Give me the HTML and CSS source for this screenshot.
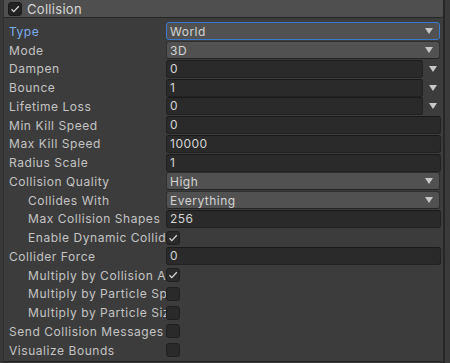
FILE: index.html
```html
<!DOCTYPE html>
<html lang="en">
<head>
    <meta charset="UTF-8">
    <title>Collision Module</title>
    <link rel="stylesheet" href="styles.css">
</head>
<body>
    <div class="inspector">
        <div class="panel">
            <!-- Module header -->
            <div class="module-header">
                <span class="check check-header">
                    <svg viewBox="0 0 14 14" width="14" height="14"><path d="M3.5 7.2 L5.8 9.6 L10.8 4.2" fill="none" stroke="#d8d8d8" stroke-width="1.3"/></svg>
                </span>
                <span class="module-title">Collision</span>
            </div>

            <div class="rows">
                <div class="row">
                    <span class="label focused">Type</span>
                    <div class="popup focus"><span>World</span><i class="arrow"></i></div>
                </div>
                <div class="row">
                    <span class="label">Mode</span>
                    <div class="popup"><span>3D</span><i class="arrow"></i></div>
                </div>
                <div class="row">
                    <span class="label">Dampen</span>
                    <div class="curve-field"><div class="number">0</div><i class="arrow"></i></div>
                </div>
                <div class="row">
                    <span class="label">Bounce</span>
                    <div class="curve-field"><div class="number">1</div><i class="arrow"></i></div>
                </div>
                <div class="row">
                    <span class="label">Lifetime Loss</span>
                    <div class="curve-field"><div class="number">0</div><i class="arrow"></i></div>
                </div>
                <div class="row">
                    <span class="label">Min Kill Speed</span>
                    <div class="number">0</div>
                </div>
                <div class="row">
                    <span class="label">Max Kill Speed</span>
                    <div class="number">10000</div>
                </div>
                <div class="row">
                    <span class="label">Radius Scale</span>
                    <div class="number">1</div>
                </div>
                <div class="row">
                    <span class="label">Collision Quality</span>
                    <div class="popup"><span>High</span><i class="arrow"></i></div>
                </div>
                <div class="row sub">
                    <span class="label">Collides With</span>
                    <div class="popup"><span>Everything</span><i class="arrow"></i></div>
                </div>
                <div class="row sub">
                    <span class="label">Max Collision Shapes</span>
                    <div class="number">256</div>
                </div>
                <div class="row sub">
                    <span class="label">Enable Dynamic Colliders</span>
                    <span class="check on"><svg viewBox="0 0 14 14" width="14" height="14"><path d="M3.5 7.2 L5.8 9.6 L10.8 4.2" fill="none" stroke="#d8d8d8" stroke-width="1.3"/></svg></span>
                </div>
                <div class="row">
                    <span class="label">Collider Force</span>
                    <div class="number">0</div>
                </div>
                <div class="row sub">
                    <span class="label">Multiply by Collision Angle</span>
                    <span class="check on"><svg viewBox="0 0 14 14" width="14" height="14"><path d="M3.5 7.2 L5.8 9.6 L10.8 4.2" fill="none" stroke="#d8d8d8" stroke-width="1.3"/></svg></span>
                </div>
                <div class="row sub">
                    <span class="label">Multiply by Particle Speed</span>
                    <span class="check"></span>
                </div>
                <div class="row sub">
                    <span class="label">Multiply by Particle Size</span>
                    <span class="check"></span>
                </div>
                <div class="row">
                    <span class="label">Send Collision Messages</span>
                    <span class="check"></span>
                </div>
                <div class="row">
                    <span class="label">Visualize Bounds</span>
                    <span class="check"></span>
                </div>
            </div>
        </div>
        <div class="scroll-strip"></div>
    </div>
</body>
</html>
```

FILE: styles.css
```css
/* Base */
body {
    margin: 0;
    background: #383838;
    font-family: 'Inter', 'Noto Sans', sans-serif;
    font-size: 12px;
    color: #c4c4c4;
    overflow: hidden;
}

.inspector {
    display: flex;
    height: 363px;
}

.panel {
    width: 439px;
    height: 361px;
    border-left: 1px solid #303030;
    margin-left: 3px;
    border-bottom: 1px solid #242424;
    background: #3c3c3c;
}

.scroll-strip {
    width: 5px;
    height: 363px;
    border-left: 2px solid #262626;
    background: #3a3a3a;
}

/* Header */
.module-header {
    display: flex;
    align-items: center;
    height: 17px;
    background: #4f4f4f;
    border-bottom: 1px solid #262626;
    border-bottom-right-radius: 3px;
    padding-left: 4px;
}

.module-title {
    margin-left: 5px;
    font-size: 13px;
    color: #d6d6d6;
    letter-spacing: 0.3px;
}

/* Rows */
.rows {
    padding-top: 4px;
}

.row {
    display: flex;
    align-items: center;
    height: 18.75px;
    padding-right: 2px;
}

.label {
    flex: none;
    width: 157px;
    padding-left: 5px;
    white-space: nowrap;
    overflow: hidden;
    letter-spacing: 0.55px;
}

.row.sub .label {
    width: 138px;
    padding-left: 24px;
}

.label.focused {
    color: #7baef0;
}

/* Fields */
.popup {
    flex: 1;
    display: flex;
    align-items: center;
    justify-content: space-between;
    height: 16px;
    padding: 0 6px 0 3px;
    background: #515151;
    border: 1px solid #303030;
    border-bottom-color: #242424;
    border-radius: 3px;
    color: #d4d4d4;
    letter-spacing: 0.5px;
    margin-right: 1px;
}

.popup.focus {
    border-color: #3a7ace;
}

.number {
    flex: 1;
    height: 16px;
    line-height: 16px;
    padding-left: 3px;
    background: #2a2a2a;
    border: 1px solid #212121;
    border-top-color: #1a1a1a;
    border-radius: 3px;
    color: #d4d4d4;
    letter-spacing: 0.5px;
}

.curve-field {
    flex: 1;
    display: flex;
    align-items: center;
}

.curve-field .arrow {
    margin: 0 4px 0 6px;
}

.arrow {
    display: block;
    width: 0;
    height: 0;
    border-left: 4.5px solid transparent;
    border-right: 4.5px solid transparent;
    border-top: 6px solid #c8c8c8;
}

/* Checkboxes */
.check {
    display: flex;
    align-items: center;
    justify-content: center;
    width: 12px;
    height: 12px;
    background: #2a2a2a;
    border: 1px solid #1f1f1f;
    border-radius: 3px;
}

.check svg {
    flex: none;
}

.check-header {
    background: #222;
    border-color: #1a1a1a;
}
```
